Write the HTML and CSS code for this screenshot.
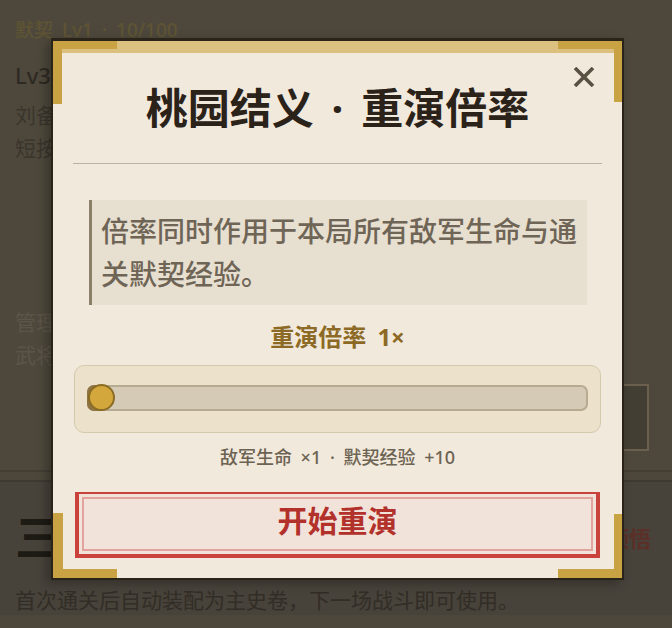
FILE: index.html
```html
<!DOCTYPE html>
<html lang="zh">
<head>
<meta charset="utf-8">
<title>桃园结义 · 重演倍率</title>
<link rel="stylesheet" href="styles.css">
</head>
<body>
<div class="page">
  <section class="top">
    <div class="bond">默契 Lv1 · 10/100</div>
    <div class="lv">Lv3 刘备</div>
    <p class="desc">刘备关羽</p>
    <p class="desc">短按查看</p>
    <p class="manage">管理史卷</p>
    <p class="manage">武将配置</p>
    <div class="side-btn"></div>
  </section>
  <section class="bottom">
    <div class="row"><span class="big">三</span><span class="wake">顿悟</span></div>
    <p class="note">首次通关后自动装配为主史卷，下一场战斗即可使用。</p>
  </section>
</div>

<div class="modal" role="dialog" aria-label="重演倍率">
  <span class="band"></span>
  <span class="corner tl"></span>
  <span class="corner tr"></span>
  <span class="corner bl"></span>
  <span class="corner br"></span>
  <button class="close" aria-label="关闭">
    <svg width="22" height="20" viewBox="0 0 22 20"><path d="M2 1 L20 19 M20 1 L2 19" stroke="#5b5142" stroke-width="3.6" fill="none"/></svg>
  </button>
  <h1 class="title">桃园结义 · 重演倍率</h1>
  <hr class="rule">
  <div class="info">倍率同时作用于本局所有敌军生命与通关默契经验。</div>
  <div class="label">重演倍率 1×</div>
  <div class="slider">
    <div class="track"><span class="fill"></span><span class="thumb"></span></div>
  </div>
  <div class="caption">敌军生命 ×1 · 默契经验 +10</div>
  <button class="start">开始重演</button>
</div>
</body>
</html>
```

FILE: styles.css
```css
html, body {
  margin: 0;
  padding: 0;
}
body {
  width: 672px;
  height: 628px;
  overflow: hidden;
  background: #4d473b;
  font-family: "Noto Sans", "Noto Sans CJK SC", sans-serif;
  position: relative;
}
.page {
  height: 628px;
  overflow: hidden;
}
.top {
  padding: 18px 0 19px 15px;
  border-bottom: 2px solid #433e34;
  background: #4e483c;
  display: flex;
  flex-direction: column;
}
.bond {
  font-size: 19px;
  line-height: 24px;
  word-spacing: 4px;
  color: #5e5434;
  font-weight: 500;
}
.lv {
  margin-top: 18px;
  font-size: 22px;
  line-height: 30px;
  color: #2e2a23;
  font-weight: 500;
}
.desc {
  margin: 0;
  font-size: 21px;
  line-height: 33px;
  color: #3a352c;
}
.desc:first-of-type {
  margin-top: 9px;
}
.manage {
  margin: 0;
  font-size: 21px;
  line-height: 33px;
  color: #5b5549;
}
.desc + .manage {
  margin-top: 141px;
}
.side-btn {
  align-self: flex-end;
  margin: 12px 23px 0 0;
  width: 90px;
  height: 63px;
  border: 2px solid #6a604d;
  background: #433e34;
}
.bottom {
  margin-top: 8px;
  border-top: 2px solid #3e3a31;
  background: #47423a;
  padding: 27px 21px 0 15px;
}
.row {
  display: flex;
  justify-content: space-between;
  align-items: center;
  height: 56px;
}
.big {
  font-size: 48px;
  font-weight: 700;
  line-height: 56px;
  color: #1e1a14;
}
.wake {
  font-size: 22px;
  font-weight: 700;
  color: #5a3028;
}
.note {
  margin: 20px 0 0;
  font-size: 21px;
  line-height: 30px;
  color: #322d26;
}

/* modal */
.modal {
  position: absolute;
  left: 51px;
  top: 38px;
  width: 573px;
  height: 542px;
  box-sizing: border-box;
  border: 2px solid #2a2319;
  border-top-width: 3px;
  background: #f1e9dc;
  padding: 39px 21px 0;
  box-shadow: -4px 3px 10px rgba(0, 0, 0, 0.28);
  display: flex;
  flex-direction: column;
}
.band {
  position: absolute;
  left: 0;
  right: 0;
  top: 0;
  height: 12px;
  background: #dbc07f;
}
.corner {
  position: absolute;
  width: 64px;
  height: 63px;
  box-sizing: border-box;
  border: 0 solid #c9a244;
}
.corner.tl { left: 0; top: 0; border-top-width: 8px; border-left-width: 9px; }
.corner.tr { right: 0; top: 0; border-top-width: 8px; border-right-width: 8px; height: 61px; }
.corner.bl { left: 0; bottom: 0; border-bottom-width: 9px; border-left-width: 10px; height: 65px; }
.corner.br { right: 0; bottom: 0; border-bottom-width: 9px; border-right-width: 8px; height: 64px; }

.close {
  position: absolute;
  right: 27px;
  top: 26px;
  width: 22px;
  height: 20px;
  padding: 0;
  border: 0;
  background: none;
  display: block;
}
.close svg { display: block; }

.title {
  margin: 0;
  text-align: center;
  font-size: 42px;
  line-height: 56px;
  word-spacing: 7px;
  font-weight: 700;
  color: #2b2219;
}
.rule {
  margin: 27px -1px 0;
  border: 0;
  height: 1px;
  background: #bcb2a2;
}
.info {
  margin: 36px 14px 0 15px;
  border-left: 3px solid #8b7f6a;
  background: #e7dfd0;
  padding: 10px 6px 9px 9px;
  font-size: 28px;
  line-height: 43px;
  font-weight: 500;
  color: #6f6556;
}
.label {
  margin-top: 16px;
  text-align: center;
  font-size: 24px;
  line-height: 32px;
  word-spacing: 5px;
  font-weight: 700;
  color: #8c6a25;
}
.slider {
  margin-top: 12px;
  border: 1px solid #d5c9ad;
  border-radius: 10px;
  background: #ece2cb;
  padding: 19px 12px 21px;
}
.track {
  position: relative;
  height: 26px;
  box-sizing: border-box;
  border: 2px solid #b6aa90;
  border-radius: 7px;
  background: #d5cab5;
}
.fill {
  position: absolute;
  left: -2px;
  top: -2px;
  width: 16px;
  height: 26px;
  border-radius: 7px 0 0 7px;
  background: #8d7442;
}
.thumb {
  position: absolute;
  left: -1px;
  top: -3px;
  width: 27px;
  height: 27px;
  box-sizing: border-box;
  border-radius: 50%;
  border: 2px solid #8a6c25;
  background: #d3a73c;
}
.caption {
  margin-top: 12px;
  text-align: center;
  font-size: 18px;
  line-height: 24px;
  word-spacing: 4px;
  font-weight: 500;
  color: #6d6352;
}
.start {
  margin: 23px 1px 0;
  height: 66px;
  box-sizing: border-box;
  border: 4px solid #c9423c;
  border-top-width: 2px;
  background: #f2e3da;
  box-shadow: inset 0 0 0 3px #f2e3da, inset 0 0 0 5px #e2a29d;
  font-family: "Noto Sans", "Noto Sans CJK SC", sans-serif;
  font-size: 30px;
  line-height: 40px;
  font-weight: 700;
  color: #b3312b;
  padding: 0 0 6px;
}
```
